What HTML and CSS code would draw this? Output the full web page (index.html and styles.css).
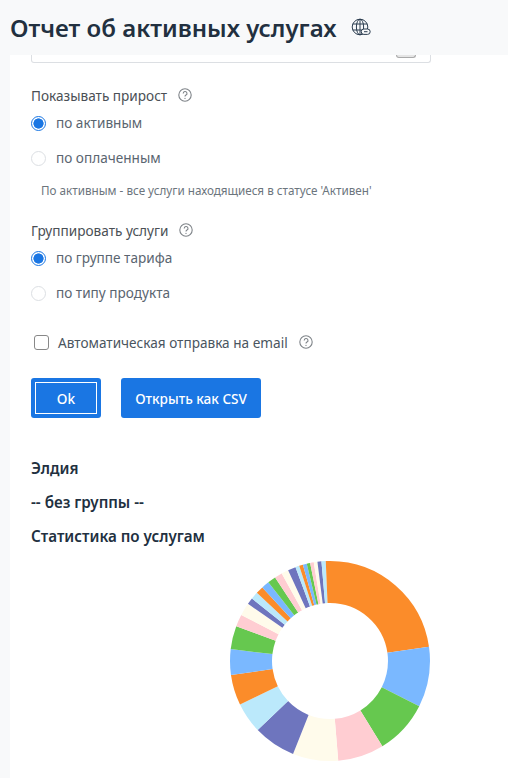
FILE: index.html
```html
<!DOCTYPE html>
<html lang="ru">
<head>
<meta charset="utf-8">
<title>Отчет об активных услугах</title>
<link rel="stylesheet" href="styles.css">
</head>
<body>
<header class="page-header">
  <h1 class="page-title">Отчет об активных услугах</h1>
  <svg class="globe" viewBox="0 0 20 20" aria-hidden="true">
    <circle cx="9" cy="9" r="7.8"/>
    <ellipse cx="9" cy="9" rx="3.6" ry="7.8"/>
    <path d="M9 1.2v15.6M1.8 6h14.4M1.8 12h9"/>
    <rect class="globe-link" x="10.2" y="11" width="9" height="5.4" rx="2.7"/>
    <path class="globe-link-bar" d="M13 13.7h3.5"/>
  </svg>
</header>
<main class="panel">
  <div class="input-stub"><span class="input-btn"></span></div>

  <div class="field-label">Показывать прирост <svg class="help" viewBox="0 0 14 14"><circle cx="7" cy="7" r="6.2"/><path d="M5.2 5.4a1.9 1.9 0 1 1 2.8 1.7c-.7.4-1 .7-1 1.5"/><circle class="dot" cx="7" cy="10.4" r=".6"/></svg></div>
  <div class="radio-row"><span class="radio on"></span>по активным</div>
  <div class="radio-row"><span class="radio"></span>по оплаченным</div>
  <p class="hint">По активным - все услуги находящиеся в статусе 'Активен'</p>

  <div class="field-label second">Группировать услуги <svg class="help" viewBox="0 0 14 14"><circle cx="7" cy="7" r="6.2"/><path d="M5.2 5.4a1.9 1.9 0 1 1 2.8 1.7c-.7.4-1 .7-1 1.5"/><circle class="dot" cx="7" cy="10.4" r=".6"/></svg></div>
  <div class="radio-row"><span class="radio on"></span>по группе тарифа</div>
  <div class="radio-row"><span class="radio"></span>по типу продукта</div>

  <div class="check-row"><span class="checkbox"></span>Автоматическая отправка на email <svg class="help" viewBox="0 0 14 14"><circle cx="7" cy="7" r="6.2"/><path d="M5.2 5.4a1.9 1.9 0 1 1 2.8 1.7c-.7.4-1 .7-1 1.5"/><circle class="dot" cx="7" cy="10.4" r=".6"/></svg></div>

  <div class="actions">
    <button class="btn btn-ok">Ok</button>
    <button class="btn btn-csv">Открыть как CSV</button>
  </div>

  <div class="group-title first">Элдия</div>
  <div class="group-title">-- без группы --</div>
  <div class="group-title">Статистика по услугам</div>

  <svg class="donut" viewBox="0 0 200 200" aria-hidden="true">
    <g class="donut-ring">
      <circle class="c-orange" pathLength="360" stroke-dasharray="81.8 360" stroke-dashoffset="0"/>
      <circle class="c-blue" pathLength="360" stroke-dasharray="35.1 360" stroke-dashoffset="-81.8"/>
      <circle class="c-green" pathLength="360" stroke-dasharray="31.5 360" stroke-dashoffset="-116.9"/>
      <circle class="c-pink" pathLength="360" stroke-dasharray="26.8 360" stroke-dashoffset="-148.4"/>
      <circle class="c-cream" pathLength="360" stroke-dasharray="26.5 360" stroke-dashoffset="-175.2"/>
      <circle class="c-purple" pathLength="360" stroke-dasharray="24.6 360" stroke-dashoffset="-201.7"/>
      <circle class="c-sky" pathLength="360" stroke-dasharray="17.8 360" stroke-dashoffset="-226.3"/>
      <circle class="c-orange" pathLength="360" stroke-dasharray="17.8 360" stroke-dashoffset="-244.1"/>
      <circle class="c-blue" pathLength="360" stroke-dasharray="15 360" stroke-dashoffset="-261.9"/>
      <circle class="c-green" pathLength="360" stroke-dasharray="13.5 360" stroke-dashoffset="-276.9"/>
      <circle class="c-pink" pathLength="360" stroke-dasharray="7.1 360" stroke-dashoffset="-290.4"/>
      <circle class="c-cream" pathLength="360" stroke-dasharray="7.4 360" stroke-dashoffset="-297.5"/>
      <circle class="c-purple" pathLength="360" stroke-dasharray="3.8 360" stroke-dashoffset="-304.9"/>
      <circle class="c-sky" pathLength="360" stroke-dasharray="4.3 360" stroke-dashoffset="-308.7"/>
      <circle class="c-orange" pathLength="360" stroke-dasharray="4.4 360" stroke-dashoffset="-313"/>
      <circle class="c-blue" pathLength="360" stroke-dasharray="4.5 360" stroke-dashoffset="-317.4"/>
      <circle class="c-green" pathLength="360" stroke-dasharray="4.8 360" stroke-dashoffset="-321.9"/>
      <circle class="c-pink" pathLength="360" stroke-dasharray="4.4 360" stroke-dashoffset="-326.7"/>
      <circle class="c-cream" pathLength="360" stroke-dasharray="4.1 360" stroke-dashoffset="-331.1"/>
      <circle class="c-purple" pathLength="360" stroke-dasharray="4.6 360" stroke-dashoffset="-335.2"/>
      <circle class="c-sky" pathLength="360" stroke-dasharray="2.2 360" stroke-dashoffset="-339.8"/>
      <circle class="c-orange" pathLength="360" stroke-dasharray="2.2 360" stroke-dashoffset="-342"/>
      <circle class="c-blue" pathLength="360" stroke-dasharray="2.3 360" stroke-dashoffset="-344.2"/>
      <circle class="c-green" pathLength="360" stroke-dasharray="2 360" stroke-dashoffset="-346.5"/>
      <circle class="c-pink" pathLength="360" stroke-dasharray="2.1 360" stroke-dashoffset="-348.5"/>
      <circle class="c-cream" pathLength="360" stroke-dasharray="2.1 360" stroke-dashoffset="-350.6"/>
      <circle class="c-purple" pathLength="360" stroke-dasharray="2.3 360" stroke-dashoffset="-352.7"/>
      <circle class="c-sky" pathLength="360" stroke-dasharray="2.5 360" stroke-dashoffset="-355"/>
      <circle class="c-orange" pathLength="360" stroke-dasharray="2.5 360" stroke-dashoffset="-357.5"/>
    </g>
  </svg>
</main>
</body>
</html>
```
FILE: styles.css
```css
* { box-sizing: border-box; }
html, body { margin: 0; height: 100%; }
body {
  width: 508px;
  height: 778px;
  overflow: hidden;
  background: #f8f9fa;
  font-family: "Noto Sans", "Open Sans", sans-serif;
  color: #495057;
}
.page-header {
  height: 55px;
  padding-left: 10px;
  display: flex;
  align-items: center;
  gap: 15px;
  background: #f8f9fa;
}
.page-title {
  margin: 0;
  font-size: 24px;
  font-weight: 600;
  color: #22303f;
  white-space: nowrap;
}
.globe { width: 20px; height: 20px; fill: none; stroke: #2c3e50; stroke-width: 1; }
.globe-link { fill: #f8f9fa; }
.panel {
  margin-left: 10px;
  height: 723px;
  padding: 0 0 0 21px;
  background: #fff;
  overflow: hidden;
}
.input-stub {
  width: 400px;
  height: 8px;
  border: 1px solid #dcdfe3;
  border-top: 0;
  border-radius: 0 0 3px 3px;
}
.input-btn {
  display: block;
  width: 20px;
  height: 3px;
  margin-left: 364px;
  background: #e5e5e5;
  border: 1px solid #aaa;
  border-top: 0;
  border-radius: 0 0 3px 3px;
}
.field-label {
  margin-top: 22px;
  height: 20px;
  display: flex;
  align-items: center;
  gap: 11px;
  font-size: 13.6px;
  color: #4a4f55;
}
.help { width: 14px; height: 14px; fill: none; stroke: #7f8489; stroke-width: 1.1; }
.help .dot { fill: #7f8489; stroke: none; }
.radio-row {
  height: 35px;
  display: flex;
  align-items: center;
  gap: 10px;
  font-size: 13.6px;
  color: #5a6570;
}
.radio {
  width: 15px;
  height: 15px;
  margin-top: 2px;
  border: 1px solid #dcdfe3;
  border-radius: 50%;
  background: #fff;
}
.radio.on {
  border-color: #1a76e3;
  background: radial-gradient(circle, #1a76e3 0 4.8px, #fff 5.4px);
}
.hint { margin: 7px 0 0 10px; height: 16px; font-size: 11.7px; line-height: 16px; color: #6c757d; }
.check-row {
  margin: 22px 0 0 3px;
  height: 20px;
  display: flex;
  align-items: center;
  font-size: 13.6px;
  color: #4a5560;
}
.checkbox {
  width: 15px;
  height: 15px;
  margin-right: 9px;
  border: 1px solid #888;
  border-radius: 3px;
  background: #fff;
}
.check-row .help { margin-left: 11px; }
.actions { margin-top: 26px; display: flex; gap: 20px; }
.btn {
  height: 40px;
  border: 0;
  border-radius: 3px;
  background: #1a76e3;
  color: #fff;
  font: 500 13.6px "Noto Sans", sans-serif;
  padding: 0;
}
.btn-ok { width: 70px; outline: 1px solid #fff; outline-offset: -5px; }
.btn-csv { width: 140px; }
.group-title {
  margin-top: 14px;
  height: 20px;
  line-height: 20px;
  font-size: 15.2px;
  font-weight: 600;
  color: #22303f;
}
.group-title.first { margin-top: 40px; }
.donut { display: block; width: 200px; height: 200px; margin: 15px 0 0 199px; }
.donut-ring { transform: rotate(-90deg); transform-origin: 100px 100px; }
.donut-ring circle { cx: 100px; cy: 100px; r: 79px; fill: none; stroke-width: 42; }
.c-orange { stroke: #fb8c2a; }
.c-blue { stroke: #7ab8ff; }
.c-green { stroke: #66c84f; }
.c-pink { stroke: #ffcdd2; }
.c-cream { stroke: #fffbeb; }
.c-purple { stroke: #6e75be; }
.c-sky { stroke: #bbe9fb; }
```
